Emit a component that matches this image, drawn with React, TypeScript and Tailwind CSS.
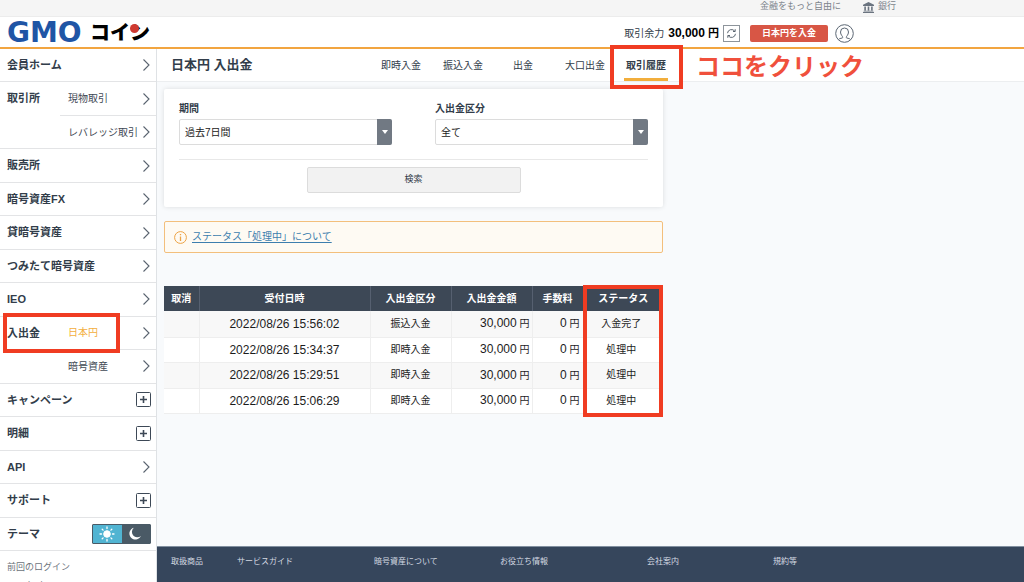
type Kind = 'link' | 'expand'

interface SideItem {
  label?: string
  sub?: string
  kind: Kind
  active?: boolean
  marked?: boolean
  joined?: boolean
}

const sideItems: SideItem[] = [
  { label: '会員ホーム', kind: 'link' },
  { label: '取引所', sub: '現物取引', kind: 'link', joined: true },
  { sub: 'レバレッジ取引', kind: 'link' },
  { label: '販売所', kind: 'link' },
  { label: '暗号資産FX', kind: 'link' },
  { label: '貸暗号資産', kind: 'link' },
  { label: 'つみたて暗号資産', kind: 'link' },
  { label: 'IEO', kind: 'link' },
  { label: '入出金', sub: '日本円', kind: 'link', active: true, marked: true, joined: true },
  { sub: '暗号資産', kind: 'link' },
  { label: 'キャンペーン', kind: 'expand' },
  { label: '明細', kind: 'expand' },
  { label: 'API', kind: 'link' },
  { label: 'サポート', kind: 'expand' },
]

const rows = [
  { date: '2022/08/26 15:56:02', type: '振込入金', amount: '30,000', fee: '0', status: '入金完了' },
  { date: '2022/08/26 15:34:37', type: '即時入金', amount: '30,000', fee: '0', status: '処理中' },
  { date: '2022/08/26 15:29:51', type: '即時入金', amount: '30,000', fee: '0', status: '処理中' },
  { date: '2022/08/26 15:06:29', type: '即時入金', amount: '30,000', fee: '0', status: '処理中' },
]

function Logo() {
  return (
    <a href="#" aria-label="GMOコイン" className="relative flex w-[143px] items-center justify-between leading-none">
      <span className="font-['DejaVu_Sans'] text-[28px] leading-6 font-bold text-[#1f55a5]">GMO</span>
      <span className="text-[20px] leading-6 font-black text-black">コイン</span>
      <span className="absolute top-[3px] right-[11px] size-[9px] rounded-full bg-[#cf3a30]" />
    </a>
  )
}

function BankIcon() {
  return (
    <svg className="size-[11px]" viewBox="0 0 11 11" fill="#6b7480">
      <path d="M5.5 0L11 2.800V4H0V2.800zM1.300 4.600h1.600V8.500H1.300zM4.700 4.600h1.600V8.500H4.700zM8.100 4.600h1.600V8.500H8.100zM.6 8.800h9.800v.8H.6zM0 10h11v1H0z" />
    </svg>
  )
}

function ReloadIcon() {
  return (
    <svg className="size-[11px]" viewBox="0 0 11 11" fill="none" stroke="#4d5864" strokeWidth="0.9">
      <path d="M1.500 5.200a4 4 0 017.300-1.900M9.500 5.800a4 4 0 01-7.300 1.900" />
      <path d="M9.200 1.200v2.300H7M1.800 9.800V7.500H4" />
    </svg>
  )
}

function UserIcon() {
  return (
    <svg className="size-[19px]" viewBox="0 0 19 19" fill="none" stroke="#5b6673">
      <circle cx="9.5" cy="9.5" r="8.8" />
      <path d="M3.5 15.5c1-1.500 4-1 4.300-2 .2-1-2.300-2.500-2.300-5.500a4 4 0 018 0c0 3-2.500 4.500-2.300 5.500.3 1 3.300.5 4.300 2" />
    </svg>
  )
}

function SunIcon() {
  return (
    <svg className="size-4" viewBox="0 0 16 16" fill="white" stroke="white">
      <circle cx="8" cy="8" r="3.300" />
      <path
        d="M8 1v1.500M8 13.500V15M1 8h1.500M13.500 8H15M3.200 3.200l.9.9M11.900 11.900l.9.9M3.200 12.800l.9-.9M11.900 4.100l.9-.9"
        strokeWidth="1.300"
        strokeLinecap="round"
      />
    </svg>
  )
}

function MoonIcon() {
  return (
    <svg className="size-[13px]" viewBox="0 0 13 13" fill="white">
      <path d="M4.800.8A5.400 5.400 0 0011.900 9 6 6 0 114.800.8z" />
    </svg>
  )
}

function Chevron() {
  return (
    <svg className="h-3.5 w-2" viewBox="0 0 8 14" fill="none" stroke="#59636f" strokeWidth="1.1">
      <path d="M1.500 1.500L7 7l-5.500 5.500" />
    </svg>
  )
}

function PlusBox() {
  return (
    <svg className="size-[15px]" viewBox="0 0 15 15" fill="none" stroke="#3d4856">
      <rect x="0.5" y="0.5" width="14" height="14" rx="1" />
      <path d="M4 7.500h7M7.500 4v7" strokeWidth="1.600" />
    </svg>
  )
}

function SideRow({ item }: { item: SideItem }) {
  return (
    <li className={`relative flex items-center border-b pl-[7px] ${item.joined ? 'border-transparent' : 'border-[#e3e4e6]'}`}>
      {item.joined && <span className="absolute right-0 -bottom-px left-[60px] border-b border-[#e3e4e6]" />}
      {item.marked && <span className="absolute -top-1 -bottom-1 left-[3px] w-[117px] border-4 border-[#f03c22]" />}
      {item.label && <a href="#" className="text-[11px] font-bold text-[#323d4a]">{item.label}</a>}
      {item.sub && (
        <a href="#" className={`absolute left-[68px] text-[10px] ${item.active ? 'text-[#f3ae3d]' : 'text-[#3f4954]'}`}>
          {item.sub}
        </a>
      )}
      <span className={`ml-auto ${item.kind === 'link' ? 'pr-[6px]' : 'pr-[5px]'}`}>
        {item.kind === 'link' ? <Chevron /> : <button type="button" aria-label={item.label} className="block"><PlusBox /></button>}
      </span>
    </li>
  )
}

function Sidebar() {
  return (
    <aside className="w-[157px] shrink-0 border-r border-[#dfe2e5] bg-white">
      <ul className="grid min-h-[502px] auto-rows-fr">
        {sideItems.map((item, i) => <SideRow key={i} item={item} />)}
        <li className="flex items-center justify-between border-b border-[#e3e4e6] pr-[5px] pl-[7px]">
          <span className="text-[11px] font-bold text-[#323d4a]">テーマ</span>
          <span className="flex h-5 w-[59px] overflow-hidden rounded-[1px] border border-[#4a5a66]">
            <button type="button" aria-label="ライト" className="flex flex-1 items-center justify-center bg-[#51b4d2]">
              <SunIcon />
            </button>
            <button type="button" aria-label="ダーク" className="flex flex-1 items-center justify-center bg-[#4a5a66]">
              <MoonIcon />
            </button>
          </span>
        </li>
      </ul>
      <div className="px-[7px] pt-2 text-[9px] text-[#6b727b]">
        <p className="leading-4">前回のログイン</p>
        <p className="pt-0.5 leading-4">2022/08/27 09:20</p>
      </div>
    </aside>
  )
}

function SelectField({ id, label, value }: { id: string; label: string; value: string }) {
  return (
    <div className="flex flex-1 flex-col">
      <label htmlFor={id} className="text-[10px] leading-5 font-bold text-[#323d4a]">{label}</label>
      <div className="relative">
        <select id={id} className="block h-[26px] w-full appearance-none rounded-xs border border-[#dcdcdc] bg-white px-[5px] text-[10px] text-[#222]">
          <option>{value}</option>
        </select>
        <span className="pointer-events-none absolute inset-y-0 right-0 flex w-[15px] items-center justify-center rounded-r-xs bg-[#717983]">
          <svg className="h-1 w-1.5" viewBox="0 0 6 4" fill="white"><path d="M0 0h6L3 4z" /></svg>
        </span>
      </div>
    </div>
  )
}

function Yen({ value }: { value: string }) {
  return <><span className="text-xs">{value}</span> 円</>
}

function HistoryTable() {
  const th = 'border-l border-[#566070] text-center font-bold'
  const td = 'border-l border-[#eeeeee] leading-4'
  return (
    <div className="relative mt-[33px]">
      <table className="w-full table-fixed border-collapse text-[10px] text-[#1c1c1c]">
        <colgroup>
          <col className="w-[35px]" />
          <col />
          <col className="w-[81px]" />
          <col className="w-[81px]" />
          <col className="w-[51px]" />
          <col className="w-[80px]" />
        </colgroup>
        <thead>
          <tr className="h-[25px] bg-[#3d4856] text-white">
            <th className="text-center font-bold">取消</th>
            <th className={th}>受付日時</th>
            <th className={th}>入出金区分</th>
            <th className={th}>入出金金額</th>
            <th className={th}>手数料</th>
            <th className={th}>ステータス</th>
          </tr>
        </thead>
        <tbody>
          {rows.map(row => (
            <tr key={row.date} className="border-b border-[#eeeeee] odd:h-[26px] odd:bg-[#f8f8f8] even:h-[25px] even:bg-white">
              <td />
              <td className={`${td} text-center text-xs`}>{row.date}</td>
              <td className={`${td} text-center`}>{row.type}</td>
              <td className={`${td} pr-0.5 text-right`}><Yen value={row.amount} /></td>
              <td className={`${td} pr-[3px] text-right`}><Yen value={row.fee} /></td>
              <td className={`${td} pr-1 text-center`}>{row.status}</td>
            </tr>
          ))}
        </tbody>
      </table>
      <span className="pointer-events-none absolute -top-px right-0 -bottom-[3px] w-20 border-4 border-[#f03c22]" />
    </div>
  )
}

export default function App() {
  return (
    <div className="flex h-screen flex-col overflow-hidden bg-[#f8fafc] font-['Liberation_Sans','Noto_Sans_CJK_JP',sans-serif] text-[#323d4a]">
      <div className="flex h-[17px] shrink-0 items-center justify-end gap-[22px] border-b border-[#ececec] bg-[#f5f5f5] pr-32 pb-0.5 text-[9px] text-[#7c838b]">
        <span>金融をもっと自由に</span>
        <a href="#" className="flex items-center gap-1"><BankIcon />銀行</a>
      </div>

      <header className="flex h-8 shrink-0 items-center justify-between border-b-2 border-[#f2a540] bg-white pt-0.5 pr-[170px] pl-[7px]">
        <Logo />
        <div className="flex items-center">
          <span className="mr-1 text-[10px]">取引余力</span>
          <span className="mr-1 text-[11px] font-bold text-black"><span className="text-xs">30,000</span> 円</span>
          <button type="button" aria-label="更新" className="mr-[10px] flex size-[17px] items-center justify-center border border-[#8d949b]">
            <ReloadIcon />
          </button>
          <button type="button" className="mr-[7px] h-[17px] w-[78px] rounded-xs bg-[#d85645] text-[9px] leading-4 font-bold text-white">日本円を入金</button>
          <button type="button" aria-label="アカウント"><UserIcon /></button>
        </div>
      </header>

      <div className="flex min-h-0 flex-1">
        <Sidebar />
        <div className="flex min-w-0 flex-1 flex-col">
          <div className="flex h-[33px] shrink-0 items-center border-b border-[#eceef0] bg-white pl-[14px]">
            <h1 className="w-[210px] text-[13px] font-bold">日本円 入出金</h1>
            <nav className="flex h-full items-center text-[10px]">
              <a href="#" className="mr-[22px]">即時入金</a>
              <a href="#" className="mr-[30px]">振込入金</a>
              <a href="#" className="mr-8">出金</a>
              <a href="#" className="mr-[19px]">大口出金</a>
              <a href="#" className="relative flex h-full items-center border-b-3 border-[#f2ae3c] px-0.5 pt-[3px] font-bold">
                取引履歴
                <span className="absolute -top-1 -right-[15px] -bottom-[11px] -left-[14px] border-4 border-[#f03c22]" />
              </a>
            </nav>
            <p className="ml-[28px] pt-1 text-2xl font-bold text-[#f0503c]">ココをクリック</p>
          </div>

          <main className="w-[506px] flex-1 pt-[7px] pl-[7px]">
            <form className="rounded-xs bg-white px-[15px] pt-[10px] pb-[14px] shadow-[0_0_5px_rgba(0,0,0,0.12)]">
              <div className="flex gap-[43px]">
                <SelectField id="period" label="期間" value="過去7日間" />
                <SelectField id="category" label="入出金区分" value="全て" />
              </div>
              <div className="mt-[14px] border-t border-[#e8e8e8] pt-[7px]">
                <button type="button" className="mx-auto block h-[26px] w-[214px] rounded-xs border border-[#dcdcdc] bg-[#f2f2f2] text-[9px]">検索</button>
              </div>
            </form>

            <div className="mt-[14px] flex h-8 items-center gap-[5px] rounded-xs border border-[#f3bf7c] bg-[#fefaf3] pl-[9px]">
              <svg className="size-[13px]" viewBox="0 0 13 13" fill="none" stroke="#eda345">
                <circle cx="6.5" cy="6.5" r="5.9" />
                <path d="M6.500 5.500v4.500M6.500 3v1.300" strokeWidth="1.300" />
              </svg>
              <a href="#" className="pb-0.5 text-[10px] text-[#3d7eae] underline underline-offset-2">ステータス「処理中」について</a>
            </div>

            <HistoryTable />
          </main>

          <footer className="flex h-9 shrink-0 border-t border-[#8290a0] bg-[#36465c] pt-[7px] pl-[14px] text-[8px] leading-4 text-[#d5dbe3]">
            <a href="#" className="w-[66px]">取扱商品</a>
            <a href="#" className="w-[137px]">サービスガイド</a>
            <a href="#" className="w-[126px]">暗号資産について</a>
            <a href="#" className="w-[147px]">お役立ち情報</a>
            <a href="#" className="w-[126px]">会社案内</a>
            <a href="#">規約等</a>
          </footer>
        </div>
      </div>
    </div>
  )
}
